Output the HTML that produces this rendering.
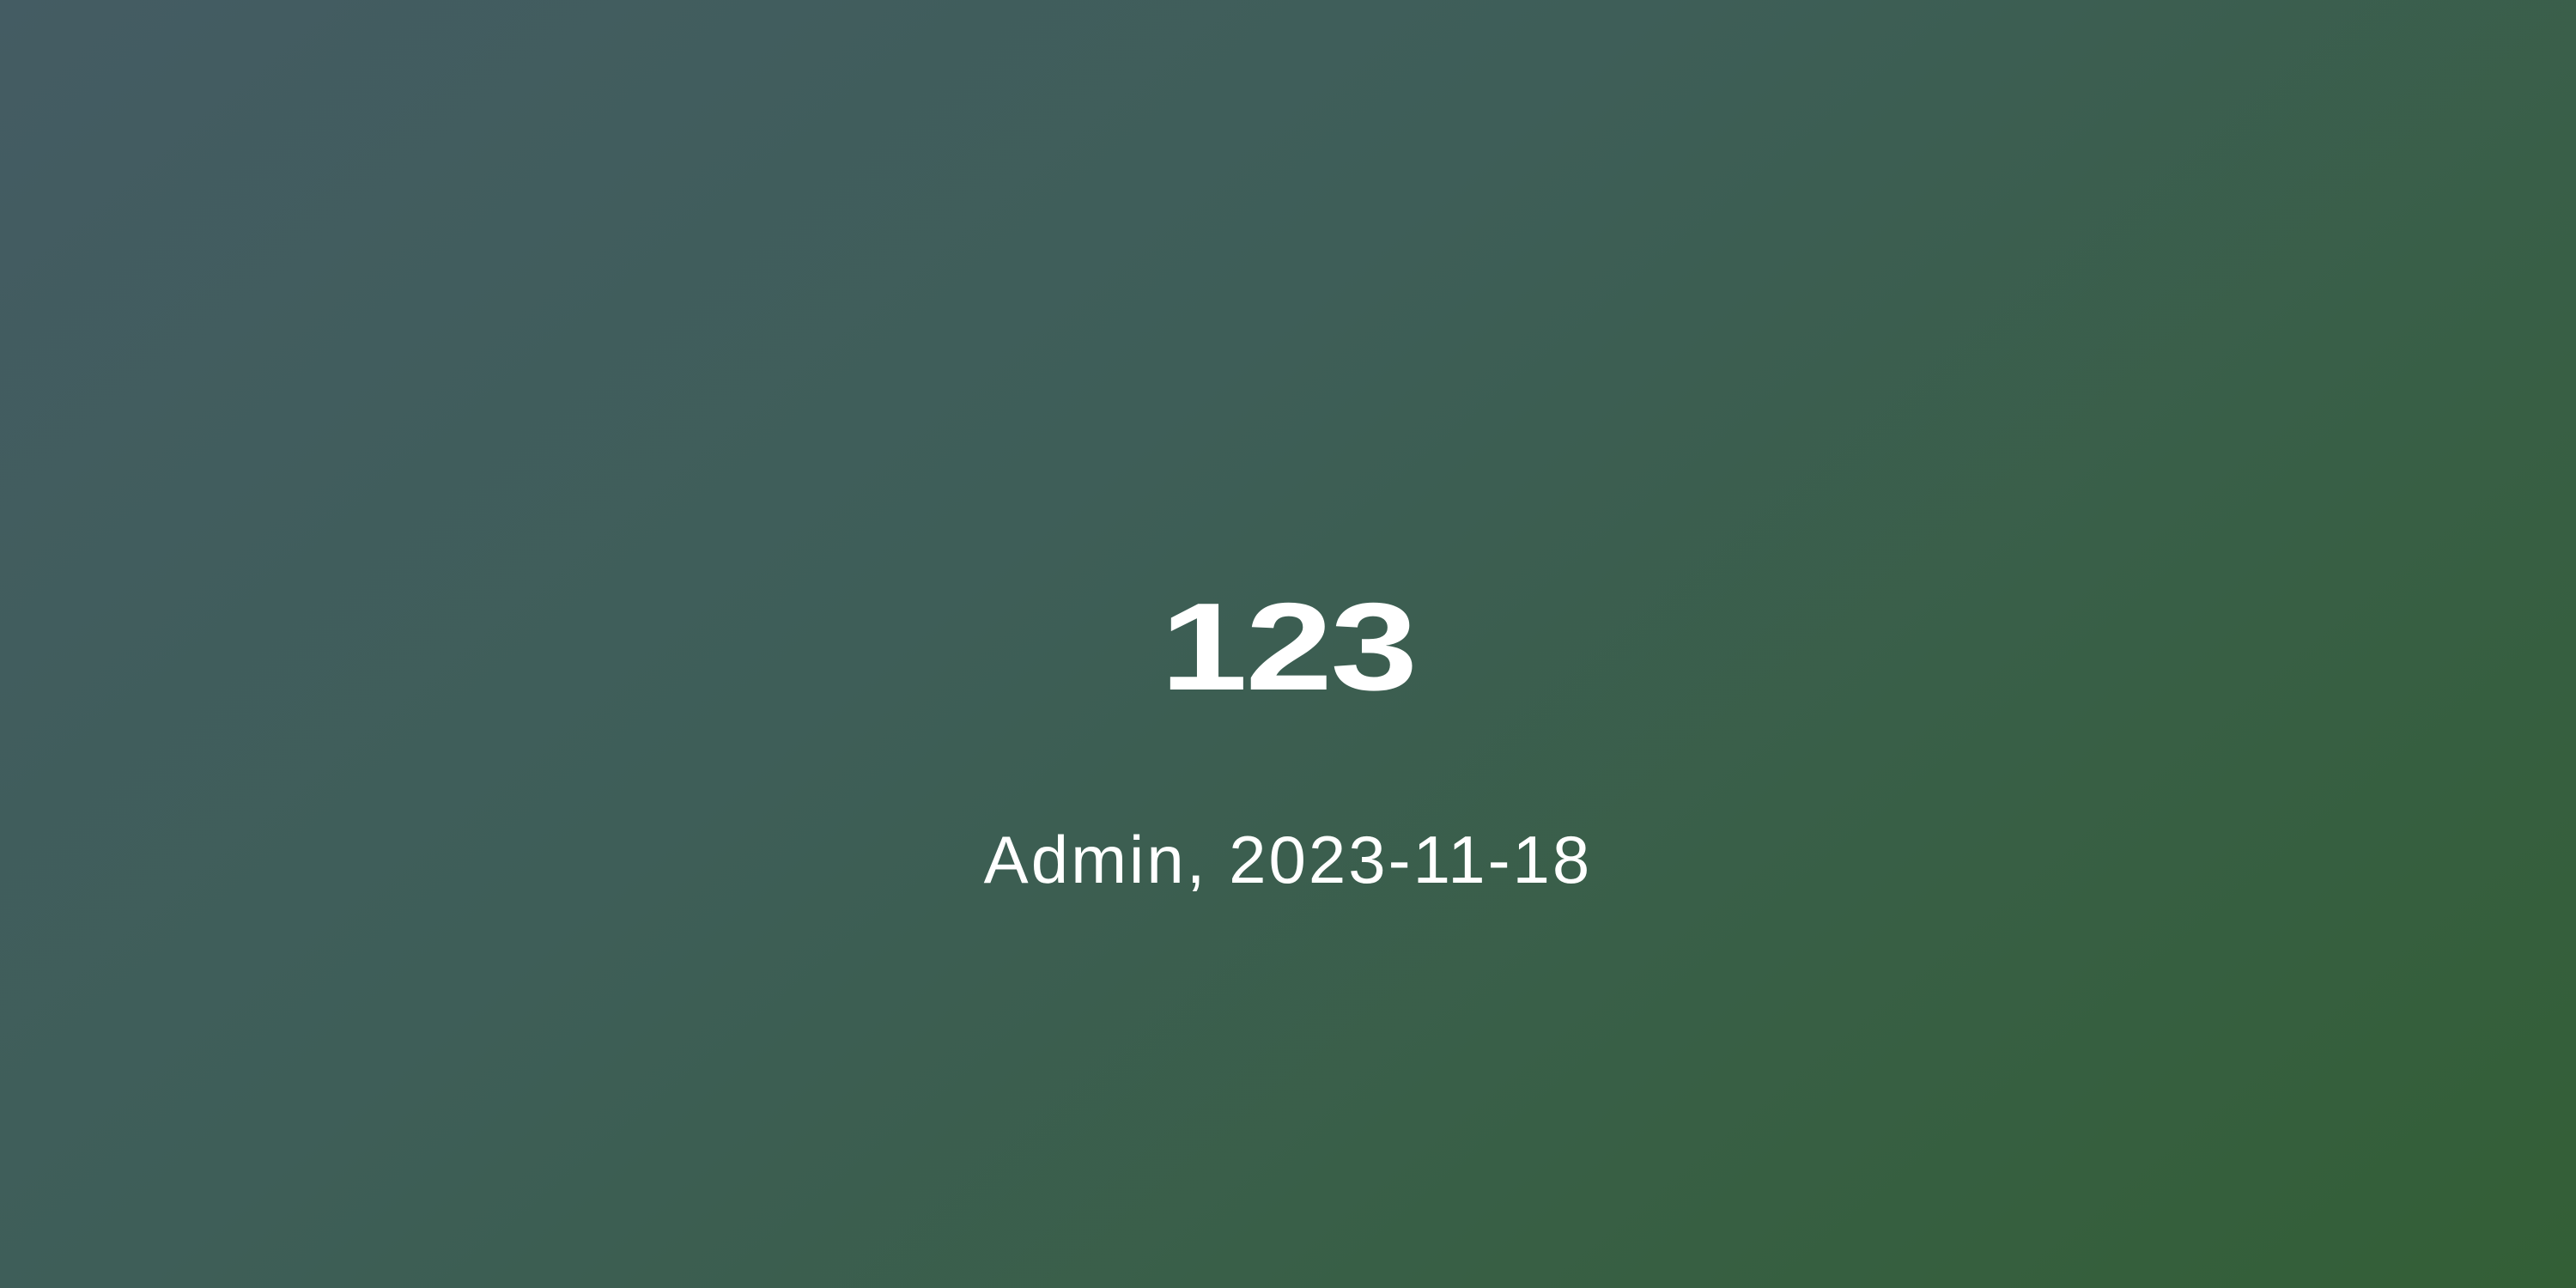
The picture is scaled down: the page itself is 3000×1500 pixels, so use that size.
<!DOCTYPE html>
<html><head><meta charset="utf-8"><style>
html,body{margin:0;padding:0}
body{width:3000px;height:1500px;overflow:hidden;position:relative;
background:linear-gradient(140deg,#445c63 0%,#3e5e58 40%,#385f45 72%,#335f36 100%);
font-family:"Liberation Sans",sans-serif;color:#fff}
.t{position:absolute;left:0;width:3000px;text-align:center;line-height:1;white-space:nowrap}
.a{top:681px;font-size:145px;font-weight:bold}
.a span{display:inline-block;transform:scaleX(1.26);letter-spacing:-2px}
.b{top:962px;font-size:78px;letter-spacing:3px}
</style></head><body>
<div class="t a"><span>123</span></div>
<div class="t b">Admin, 2023-11-18</div>
</body></html>
